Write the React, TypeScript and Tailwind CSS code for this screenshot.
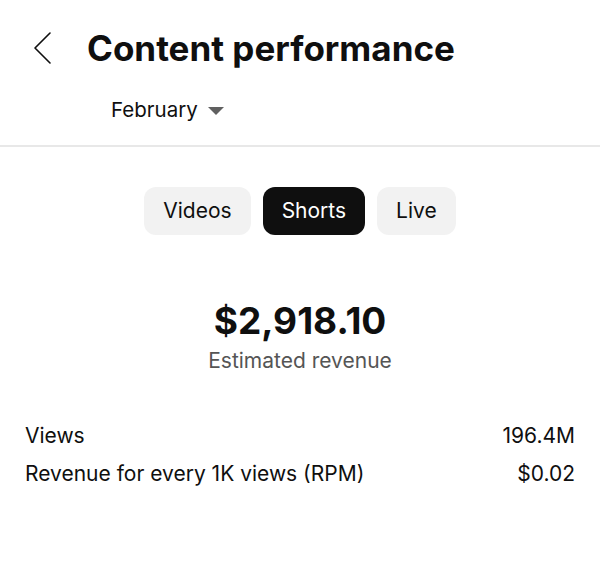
export default function App() {
  return (
    <div
      className="w-[600px] h-[579px] bg-white text-[#0f0f0f] overflow-hidden"
      style={{ fontFamily: 'Inter, Roboto, sans-serif' }}
    >
      {/* Header */}
      <div className="border-b-2 border-[#e8e8e8] pb-[21px]">
        <div className="flex items-center pt-[24px] pl-[33px]">
          <svg width="20" height="32" viewBox="0 0 20 32" fill="none" stroke="#0f0f0f" strokeWidth="1.6" strokeLinecap="round" strokeLinejoin="round">
            <polyline points="17 1 2 16 17 31" />
          </svg>
          <h1 className="ml-[34px] text-[35px] leading-[48px] font-bold">Content performance</h1>
        </div>
        <div className="flex items-center pl-[111px] mt-[24px]">
          <span className="text-[20.5px] leading-[28px]">February</span>
          <svg className="ml-[10px] mt-[1px]" width="16" height="8" viewBox="0 0 16 8">
            <polygon points="0 0 16 0 8 8" fill="#606060" />
          </svg>
        </div>
      </div>

      {/* Tabs */}
      <div className="flex justify-center gap-[12px] mt-[40px]">
        <button className="h-[48px] px-[19px] rounded-[12px] bg-[#f2f2f2] text-[21px]">Videos</button>
        <button className="h-[48px] px-[19px] rounded-[12px] bg-[#0f0f0f] text-white text-[21px]">Shorts</button>
        <button className="h-[48px] px-[19px] rounded-[12px] bg-[#f2f2f2] text-[21px]">Live</button>
      </div>

      {/* Revenue */}
      <div className="flex flex-col items-center mt-[64px]">
        <div className="text-[37px] leading-[44px] font-bold">$2,918.10</div>
        <div className="text-[21px] leading-[28px] text-[#555555] mt-[4px]">Estimated revenue</div>
      </div>

      {/* Stats */}
      <div className="px-[25px] mt-[46px] flex flex-col gap-[9px] text-[21px] leading-[29px]">
        <div className="flex justify-between">
          <span>Views</span>
          <span>196.4M</span>
        </div>
        <div className="flex justify-between">
          <span>Revenue for every 1K views (RPM)</span>
          <span>$0.02</span>
        </div>
      </div>
    </div>
  );
}
